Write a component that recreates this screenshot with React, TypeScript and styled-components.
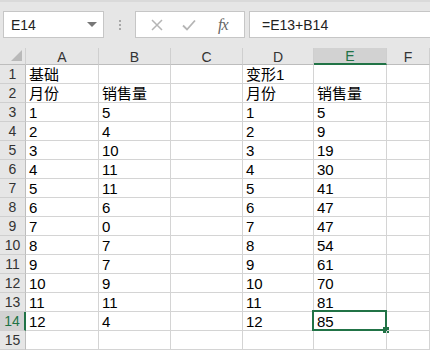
import React from "react";
import styled, { createGlobalStyle } from "styled-components";

const Global = createGlobalStyle`
  html, body { margin: 0; padding: 0; background: #ffffff; }
  body { font-family: "Liberation Sans", "Noto Sans CJK SC", sans-serif; overflow: hidden; }
`;

const Page = styled.div`
  width: 430px;
  height: 350px;
  display: flex;
  flex-direction: column;
  overflow: hidden;
  background: #fff;
`;

const Toolbar = styled.div`
  height: 50px;
  box-sizing: border-box;
  background: #e6e6e6;
  border-top: 2px solid #dadada;
  display: flex;
  align-items: flex-start;
  padding: 9px 0 0 3px;
`;

const NameBox = styled.div`
  width: 101px;
  height: 27px;
  box-sizing: border-box;
  background: #fff;
  border: 1px solid #c6c6c6;
  display: flex;
  align-items: center;
  justify-content: space-between;
  padding: 0 6px 0 7px;
  font-size: 14px;
  color: #222;
`;

const Caret = styled.span`
  width: 0;
  height: 0;
  border-left: 5px solid transparent;
  border-right: 5px solid transparent;
  border-top: 5px solid #777;
`;

const Dots = styled.div`
  width: 31px;
  height: 27px;
  display: flex;
  flex-direction: column;
  align-items: center;
  justify-content: center;
  gap: 2px;
`;

const Dot = styled.span`
  width: 2px;
  height: 2px;
  background: #a8a8a8;
`;

const ButtonBox = styled.div`
  width: 110px;
  height: 27px;
  box-sizing: border-box;
  background: #fff;
  border: 1px solid #c6c6c6;
  display: flex;
  align-items: center;
  padding-left: 12px;
  gap: 14px;
`;

const IconSlot = styled.span`
  width: 18px;
  height: 18px;
  display: flex;
  align-items: center;
  justify-content: center;
`;

const Fx = styled.span`
  font-family: "Liberation Serif", serif;
  font-style: italic;
  font-size: 16px;
  color: #666;
  margin-left: 6px;
  letter-spacing: -1px;
`;

const FormulaInput = styled.div`
  flex: 1;
  height: 27px;
  box-sizing: border-box;
  margin-left: 4px;
  background: #fff;
  border: 1px solid #c6c6c6;
  border-right: none;
  display: flex;
  align-items: center;
  padding-left: 12px;
  font-size: 14px;
  color: #222;
`;

const Grid = styled.div`
  display: grid;
  grid-template-columns: 26px 73px 72px 72px 71px 73px 1fr;
  grid-auto-rows: 19px;
  grid-template-rows: 17px;
`;

const Corner = styled.div`
  background: #e6e6e6;
  border-right: 1px solid #d0d0d0;
  border-bottom: 1px solid #bdbdbd;
  box-sizing: border-box;
  position: relative;
  &::after {
    content: "";
    position: absolute;
    right: 3px;
    bottom: 3px;
    width: 0;
    height: 0;
    border-left: 11px solid transparent;
    border-bottom: 11px solid #b9b9b9;
  }
`;

const ColHead = styled.div<{ $active?: boolean }>`
  box-sizing: border-box;
  background: ${(p) => (p.$active ? "#d2d2d2" : "#e6e6e6")};
  border-right: 1px solid #cfcfcf;
  border-bottom: ${(p) => (p.$active ? "2px solid #217346" : "1px solid #bdbdbd")};
  display: flex;
  align-items: center;
  justify-content: center;
  font-size: 14px;
  color: ${(p) => (p.$active ? "#217346" : "#333")};
  padding-top: 1px;
`;

const RowHead = styled.div<{ $active?: boolean }>`
  box-sizing: border-box;
  background: ${(p) => (p.$active ? "#d2d2d2" : "#e6e6e6")};
  border-right: ${(p) => (p.$active ? "2px solid #217346" : "1px solid #bdbdbd")};
  border-bottom: 1px solid #cfcfcf;
  display: flex;
  align-items: flex-end;
  justify-content: center;
  font-size: 14px;
  line-height: 17px;
  color: ${(p) => (p.$active ? "#217346" : "#333")};
`;

const Cell = styled.div<{ $selected?: boolean }>`
  box-sizing: border-box;
  border-right: 1px solid #d4d4d4;
  border-bottom: 1px solid #d4d4d4;
  display: flex;
  align-items: flex-end;
  padding-left: 3px;
  font-size: 15px;
  line-height: 17px;
  color: #000;
  white-space: nowrap;
  position: relative;
  ${(p) =>
    p.$selected &&
    `
    &::before {
      content: "";
      position: absolute;
      left: -2px;
      top: -2px;
      right: -1px;
      bottom: -1px;
      border: 2px solid #217346;
      pointer-events: none;
    }
    &::after {
      content: "";
      position: absolute;
      right: -3px;
      bottom: -3px;
      width: 6px;
      height: 6px;
      background: #217346;
    }
  `}
`;

const cols = ["A", "B", "C", "D", "E", "F"];

const rows: string[][] = [
  ["基础", "", "", "变形1", "", ""],
  ["月份", "销售量", "", "月份", "销售量", ""],
  ["1", "5", "", "1", "5", ""],
  ["2", "4", "", "2", "9", ""],
  ["3", "10", "", "3", "19", ""],
  ["4", "11", "", "4", "30", ""],
  ["5", "11", "", "5", "41", ""],
  ["6", "6", "", "6", "47", ""],
  ["7", "0", "", "7", "47", ""],
  ["8", "7", "", "8", "54", ""],
  ["9", "7", "", "9", "61", ""],
  ["10", "9", "", "10", "70", ""],
  ["11", "11", "", "11", "81", ""],
  ["12", "4", "", "12", "85", ""],
  ["", "", "", "", "", ""],
];

export default function App() {
  return (
    <Page>
      <Global />
      <Toolbar>
        <NameBox>
          <span>E14</span>
          <Caret />
        </NameBox>
        <Dots>
          <Dot />
          <Dot />
          <Dot />
        </Dots>
        <ButtonBox>
          <IconSlot>
            <svg width="12" height="12" viewBox="0 0 12 12">
              <path d="M1 1 L11 11 M11 1 L1 11" stroke="#b5b5b5" strokeWidth="1.5" />
            </svg>
          </IconSlot>
          <IconSlot>
            <svg width="14" height="12" viewBox="0 0 14 12">
              <path d="M1 6.5 L5 10.5 L13 1.5" stroke="#b5b5b5" strokeWidth="1.8" fill="none" />
            </svg>
          </IconSlot>
          <Fx>fx</Fx>
        </ButtonBox>
        <FormulaInput>=E13+B14</FormulaInput>
      </Toolbar>
      <Grid>
        <Corner />
        {cols.map((c) => (
          <ColHead key={c} $active={c === "E"}>
            {c}
          </ColHead>
        ))}
        {rows.map((r, i) => (
          <React.Fragment key={i}>
            <RowHead $active={i === 13}>{i + 1}</RowHead>
            {r.map((v, j) => (
              <Cell key={j} $selected={i === 13 && j === 4}>
                {v}
              </Cell>
            ))}
          </React.Fragment>
        ))}
      </Grid>
    </Page>
  );
}
